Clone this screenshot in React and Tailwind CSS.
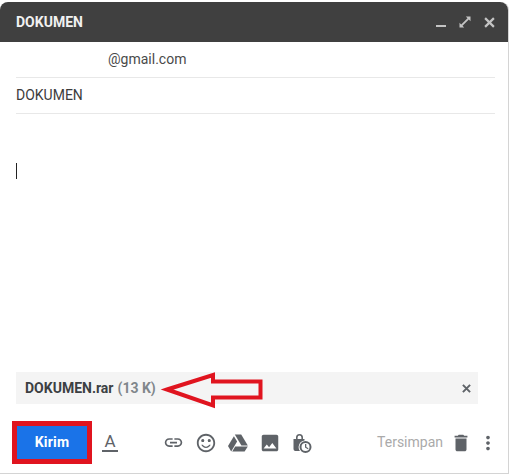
import React from "react";
import { MdInsertLink, MdSentimentSatisfiedAlt, MdPhoto, MdDelete, MdMoreVert, MdClose } from "react-icons/md";

function Drive() {
  return (
    <svg width="20" height="18" viewBox="0 0 20 18" fill="#5f6368">
      <path d="M6.8 0.5h6.4l6.6 11h-6.4z" />
      <path d="M5.9 2.2l3.2 5.4-5.9 9.9L0 12.1z" />
      <path d="M7.2 12.5h12.6l-3.2 5H4.2z" />
    </svg>
  );
}

function Confidential() {
  return (
    <svg width="20" height="20" viewBox="0 0 20 20" fill="#5f6368">
      <path d="M4 6V4.5a3.5 3.5 0 0 1 7 0V6h1.5v1.6A6.5 6.5 0 0 0 8 18H3a2 2 0 0 1-1.5-2V6zM5.6 6h3.8V4.5a1.9 1.9 0 0 0-3.8 0z" />
      <path fillRule="evenodd" d="M13.5 8a6 6 0 1 1 0 12 6 6 0 0 1 0-12zm0 2a4 4 0 1 0 0 8 4 4 0 0 0 0-8z" />
      <path d="M13 11h1.3v3l2.2 1.3-.6 1-2.9-1.7z" />
    </svg>
  );
}

function Expand() {
  return (
    <svg width="12" height="12" viewBox="0 0 12 12" fill="#c4c4c4">
      <path d="M6.8 0.5H11.5V5.2L9.8 3.5 3.5 9.8 5.2 11.5H0.5V6.8L2.2 8.5 8.5 2.2z" />
    </svg>
  );
}

function X({ size, color, w }) {
  return (
    <svg width={size} height={size} viewBox="0 0 10 10" fill="none" stroke={color} strokeWidth={w}>
      <path d="M1 1L9 9M9 1L1 9" />
    </svg>
  );
}

export default function App() {
  return (
    <div className="relative w-[512px] h-[475px] bg-white overflow-hidden font-['Roboto',sans-serif]">
      <div className="mt-[2px] w-[509px] h-[472px] flex flex-col bg-white border-r border-b border-[#d4d4d4] rounded-t-lg">
        <div className="h-[40px] shrink-0 bg-[#404040] rounded-t-lg flex items-center pl-4 pr-[13px]">
          <span className="text-[#f1f1f1] text-[14px] font-bold">DOKUMEN</span>
          <div className="ml-auto flex items-center">
            <div className="w-[10px] h-[2px] bg-[#c4c4c4] mt-[7px] mr-[13px]" />
            <Expand />
            <div className="ml-[13px]"><X size={11} color="#c4c4c4" w={2} /></div>
          </div>
        </div>
        <div className="mx-4 w-[479px] flex-col flex flex-1">
          <div className="h-[36px] shrink-0 border-b border-[#e8e8e8] flex items-center pl-[92px] text-[14px] text-[#4a4a4a]">@gmail.com</div>
          <div className="h-[36px] shrink-0 border-b border-[#e8e8e8] flex items-center text-[14px] text-[#3c3c3c]">DOKUMEN</div>
          <div className="flex-1 pt-[49px]">
            <div className="w-px h-[16px] bg-[#222]" />
          </div>
          <div className="h-[32px] w-[462px] mb-[17px] shrink-0 bg-[#f4f4f4] flex items-center pl-[9px] pr-[7px] text-[14px]">
            <span className="font-bold text-[#3c4043]">DOKUMEN.rar</span>
            <span className="font-bold text-[#80868b] ml-1">(13 K)</span>
            <div className="ml-auto"><X size={9} color="#5f6368" w={2.2} /></div>
          </div>
        </div>
        <div className="h-[43px] mb-[9px] shrink-0 flex items-center pl-[12px] pr-[9px]">
          <div className="w-[80px] h-[43px] border-[5px] border-[#e0141f] bg-[#1a73e8] flex items-center justify-center text-white text-[14px] font-bold tracking-[0.2px]">Kirim</div>
          <div className="ml-[10px] w-[16px] flex flex-col items-center text-[#5f6368]">
            <span className="text-[17px] leading-[16px]">A</span>
            <div className="w-[16px] h-[2px] bg-[#5f6368] mt-[1px]" />
          </div>
          <div className="ml-[45px] flex items-center gap-[11px] text-[#5f6368]">
            <MdInsertLink size={21} />
            <MdSentimentSatisfiedAlt size={22} />
            <Drive />
            <MdPhoto size={22} />
            <Confidential />
          </div>
          <span className="ml-auto text-[14px] text-[#aaaaaa]">Tersimpan</span>
          <MdDelete className="ml-[7px] text-[#5f6368]" size={22} />
          <MdMoreVert className="ml-[5px] text-[#5f6368]" size={22} />
        </div>
      </div>
      <svg className="absolute left-[160px] top-[370px]" width="106" height="40" viewBox="0 0 106 40" fill="none">
        <path d="M7 19.5L53 5V11.5H100.5V27.5H53V35.5Z" stroke="#e0141f" strokeWidth="4" />
      </svg>
    </div>
  );
}
